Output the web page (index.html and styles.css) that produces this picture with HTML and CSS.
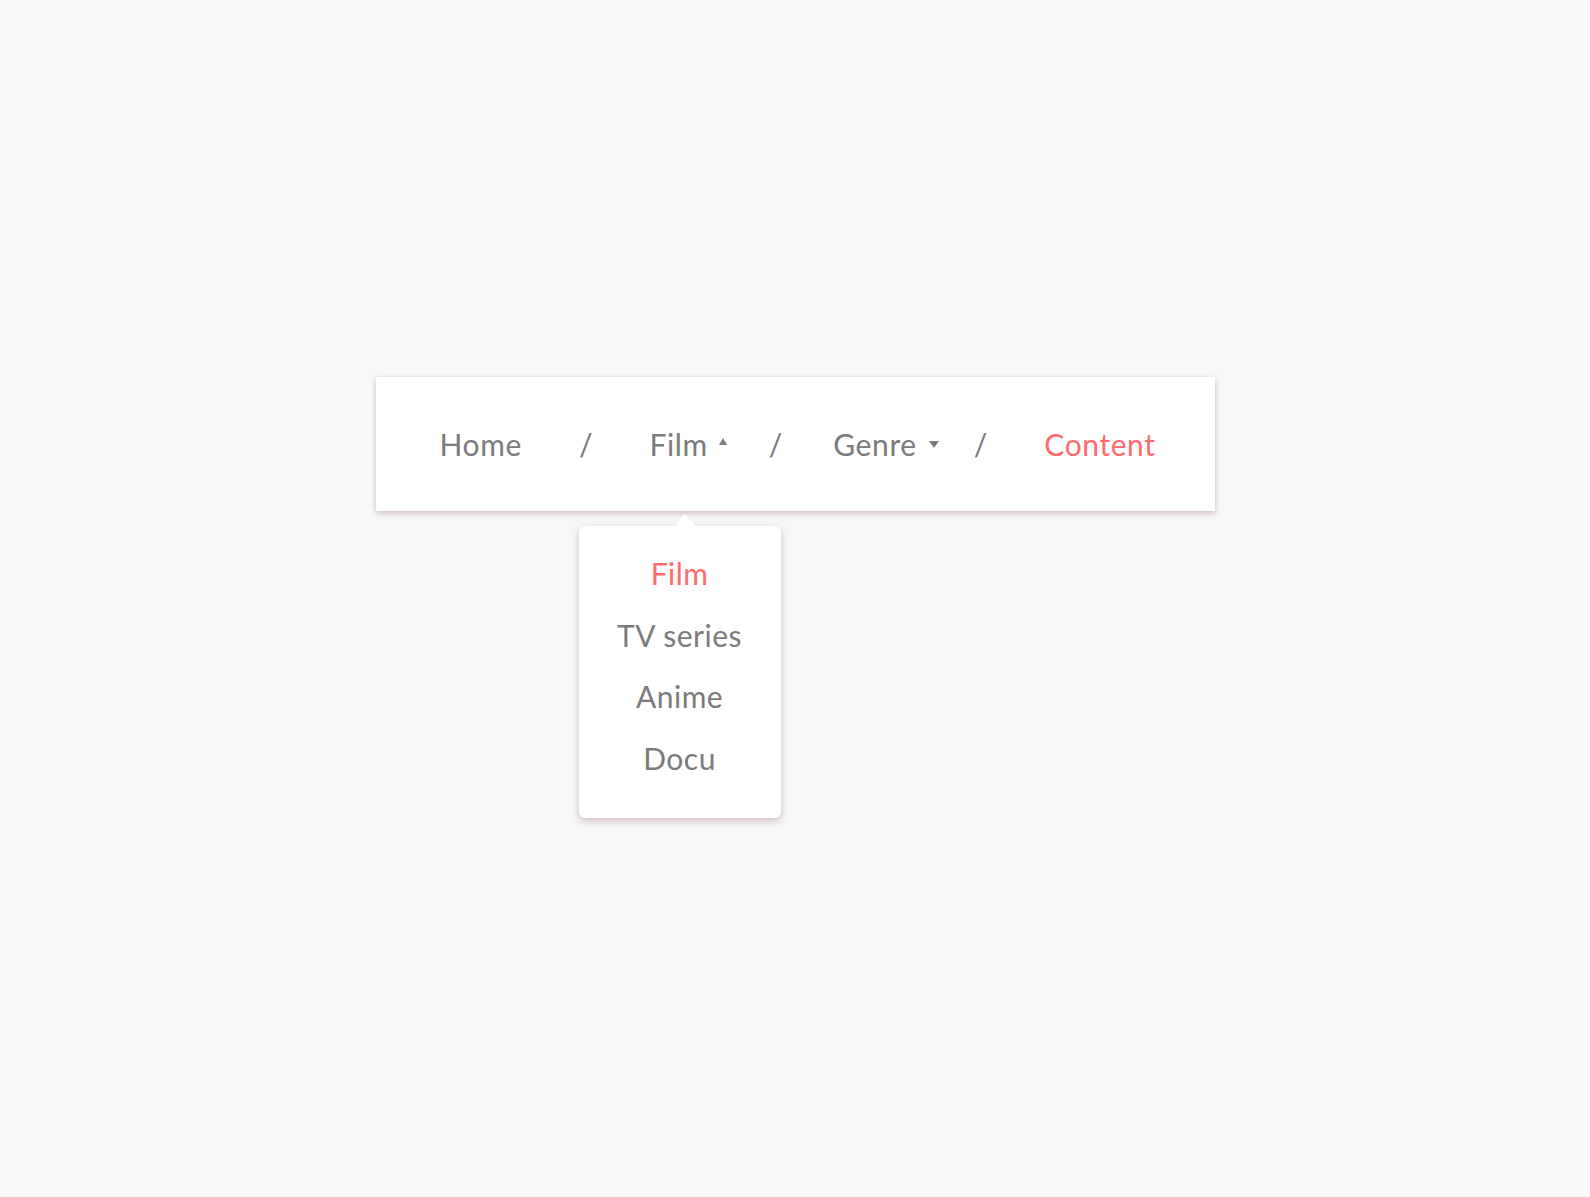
FILE: index.html
```html
<!DOCTYPE html>
<html lang="en">
<head>
<meta charset="utf-8">
<title>Breadcrumb</title>
<link rel="stylesheet" href="styles.css">
</head>
<body>
<div class="stage">
  <nav class="crumbs">
    <span class="crumb">Home</span>
    <span class="sep">/</span>
    <span class="crumb crumb-film">Film<span class="caret caret-up"></span>
      <div class="menu">
        <span class="menu-item active">Film</span>
        <span class="menu-item">TV series</span>
        <span class="menu-item">Anime</span>
        <span class="menu-item">Docu</span>
      </div>
    </span>
    <span class="sep sep-after-film">/</span>
    <span class="crumb crumb-genre">Genre<span class="caret caret-down"></span></span>
    <span class="sep">/</span>
    <span class="crumb current">Content</span>
  </nav>
</div>
</body>
</html>
```

FILE: styles.css
```css
html, body {
  margin: 0;
  padding: 0;
  background: #f7f8fa;
  font-family: Lato, "Open Sans", "Liberation Sans", sans-serif;
}

.stage {
  display: flex;
  justify-content: center;
  padding-top: 377px;
  min-height: 820px;
}

.crumbs {
  position: relative;
  display: flex;
  align-items: center;
  width: 839px;
  height: 134px;
  box-sizing: border-box;
  padding: 0 61px 0 64px;
  background: #ffffff;
  box-shadow: 0 2px 6px rgba(170, 125, 135, 0.55);
  font-size: 30px;
  color: #7b7b7b;
}

.crumb {
  position: relative;
  letter-spacing: 0.6px;
}

.sep {
  margin: 0 57px;
}

.sep-after-film {
  margin-left: 61px;
  margin-right: 51px;
}

.current {
  color: #ff6b6b;
}

.caret {
  position: absolute;
  left: 100%;
  top: 50%;
  margin-left: 11px;
  width: 0;
  height: 0;
  border-left: 4.5px solid transparent;
  border-right: 4.5px solid transparent;
}

.caret-up {
  border-bottom: 7px solid #7b7b7b;
  margin-top: -6px;
}

.crumb-genre .caret {
  margin-left: 12px;
  border-left-width: 5px;
  border-right-width: 5px;
}

.caret-down {
  border-top: 7px solid #7b7b7b;
  margin-top: -3px;
}

.menu {
  position: absolute;
  top: 100%;
  left: 50%;
  margin-top: 64px;
  margin-left: -100px;
  width: 202px;
  height: 292px;
  box-sizing: border-box;
  padding-top: 17px;
  display: flex;
  flex-direction: column;
  align-items: center;
  background: #ffffff;
  border-radius: 6px;
  box-shadow: 0 3px 8px rgba(170, 125, 135, 0.5);
  font-size: 30px;
  letter-spacing: 0.5px;
}

.menu::before {
  content: "";
  position: absolute;
  top: -12px;
  left: 96px;
  width: 0;
  height: 0;
  border-left: 10px solid transparent;
  border-right: 10px solid transparent;
  border-bottom: 12px solid #ffffff;
}

.menu-item {
  line-height: 61.5px;
  color: #7b7b7b;
}

.menu-item.active {
  color: #ff6b6b;
}
```
